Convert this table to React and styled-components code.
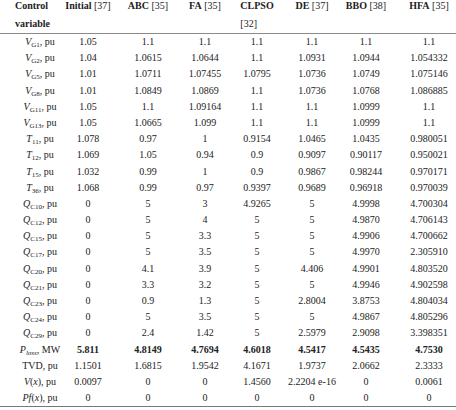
import React from 'react'
import styled, { createGlobalStyle } from 'styled-components'

const cols = '62px 52px 68px 46px 58px 52px 56px 70px'

const rows = [
    { v: 'V', sub: 'G1', vals: ['1.05', '1.1', '1.1', '1.1', '1.1', '1.1', '1.1'] },
    { v: 'V', sub: 'G2', vals: ['1.04', '1.0615', '1.0644', '1.1', '1.0931', '1.0944', '1.054332'] },
    { v: 'V', sub: 'G5', vals: ['1.01', '1.0711', '1.07455', '1.0795', '1.0736', '1.0749', '1.075146'] },
    { v: 'V', sub: 'G8', vals: ['1.01', '1.0849', '1.0869', '1.1', '1.0736', '1.0768', '1.086885'] },
    { v: 'V', sub: 'G11', vals: ['1.05', '1.1', '1.09164', '1.1', '1.1', '1.0999', '1.1'] },
    { v: 'V', sub: 'G13', vals: ['1.05', '1.0665', '1.099', '1.1', '1.1', '1.0999', '1.1'] },
    { v: 'T', sub: '11', vals: ['1.078', '0.97', '1', '0.9154', '1.0465', '1.0435', '0.980051'] },
    { v: 'T', sub: '12', vals: ['1.069', '1.05', '0.94', '0.9', '0.9097', '0.90117', '0.950021'] },
    { v: 'T', sub: '15', vals: ['1.032', '0.99', '1', '0.9', '0.9867', '0.98244', '0.970171'] },
    { v: 'T', sub: '36', vals: ['1.068', '0.99', '0.97', '0.9397', '0.9689', '0.96918', '0.970039'] },
    { v: 'Q', sub: 'C10', vals: ['0', '5', '3', '4.9265', '5', '4.9998', '4.700304'] },
    { v: 'Q', sub: 'C12', vals: ['0', '5', '4', '5', '5', '4.9870', '4.706143'] },
    { v: 'Q', sub: 'C15', vals: ['0', '5', '3.3', '5', '5', '4.9906', '4.700662'] },
    { v: 'Q', sub: 'C17', vals: ['0', '5', '3.5', '5', '5', '4.9970', '2.305910'] },
    { v: 'Q', sub: 'C20', vals: ['0', '4.1', '3.9', '5', '4.406', '4.9901', '4.803520'] },
    { v: 'Q', sub: 'C21', vals: ['0', '3.3', '3.2', '5', '5', '4.9946', '4.902598'] },
    { v: 'Q', sub: 'C23', vals: ['0', '0.9', '1.3', '5', '2.8004', '3.8753', '4.804034'] },
    { v: 'Q', sub: 'C24', vals: ['0', '5', '3.5', '5', '5', '4.9867', '4.805296'] },
    { v: 'Q', sub: 'C29', vals: ['0', '2.4', '1.42', '5', '2.5979', '2.9098', '3.398351'] },
    { v: 'P', sub: 'loss', italicSub: true, unit: 'MW', bold: true, vals: ['5.811', '4.8149', '4.7694', '4.6018', '4.5417', '4.5435', '4.7530'] },
    { text: 'TVD, pu', vals: ['1.1501', '1.6815', '1.9542', '4.1671', '1.9737', '2.0662', '2.3333'] },
    { fn: 'V', vals: ['0.0097', '0', '0', '1.4560', '2.2204 e-16', '0', '0.0061'] },
    { fn: 'Pf', vals: ['0', '0', '0', '0', '0', '0', '0'] },
]

const heads = [
    ['Initial', '37'],
    ['ABC', '35'],
    ['FA', '35'],
    ['CLPSO', '32', true],
    ['DE', '37'],
    ['BBO', '38'],
    ['HFA', '35'],
]

function Label({ row }) {
    if (row.text) return row.text
    if (row.fn) {
        return (
            <>
                <Var>{row.fn}</Var>(<Var>x</Var>), pu
            </>
        )
    }
    return (
        <>
            <Var>{row.v}</Var>
            <Sub $italic={row.italicSub}>{row.sub}</Sub>, {row.unit || 'pu'}
        </>
    )
}

function App() {
    return (
        <Page>
            <GlobalStyle />
            <Table>
                <HeadRow>
                    <CornerHead>
                        Control
                        <br />
                        variable
                    </CornerHead>
                    {heads.map(([name, ref, wrap]) => (
                        <HeadCell key={name}>
                            <HeadText>
                                <b>{name}</b>
                                {wrap ? <br /> : ' '}[{ref}]
                            </HeadText>
                        </HeadCell>
                    ))}
                </HeadRow>
                {rows.map((row, i) => (
                    <Row key={i} $last={i === rows.length - 1}>
                        <LabelCell>
                            <Label row={row} />
                        </LabelCell>
                        {row.vals.map((val, j) => (
                            <Cell key={j} $bold={row.bold}>
                                {val}
                            </Cell>
                        ))}
                    </Row>
                ))}
            </Table>
        </Page>
    )
}

export default App

const GlobalStyle = createGlobalStyle`
    html, body {
        margin: 0;
        padding: 0;
        background: #fff;
        overflow: hidden;
    }
`
const Page = styled.div`
    width: 456px;
    height: 410px;
    overflow: hidden;
    font-family: "Liberation Serif", "Times New Roman", serif;
    font-size: 10px;
    color: #222;
`
const Table = styled.div`
    width: 464px;
    margin-top: -3px;
`
const HeadRow = styled.div`
    display: grid;
    grid-template-columns: ${cols};
    line-height: 18px;
    border-bottom: 1px solid #8a8a8a;
`
const CornerHead = styled.div`
    padding-left: 15px;
    font-weight: bold;
    white-space: nowrap;
`
const HeadCell = styled.div`
    text-align: center;
    white-space: nowrap;
`
const HeadText = styled.span`
    display: inline-block;
    text-align: left;
`
const Row = styled.div`
    display: grid;
    grid-template-columns: ${cols};
    height: 16.2px;
    line-height: 16.2px;
    border-bottom: ${(p) => (p.$last ? '1px solid #777' : 'none')};
`
const LabelCell = styled.div`
    padding-left: 18px;
    text-align: center;
    white-space: nowrap;
`
const Cell = styled.div`
    text-align: center;
    white-space: nowrap;
    font-weight: ${(p) => (p.$bold ? 'bold' : 'normal')};
`
const Var = styled.i`
    font-style: italic;
`
const Sub = styled.span`
    font-size: 7px;
    font-style: ${(p) => (p.$italic ? 'italic' : 'normal')};
    vertical-align: -2px;
    line-height: 0;
`
